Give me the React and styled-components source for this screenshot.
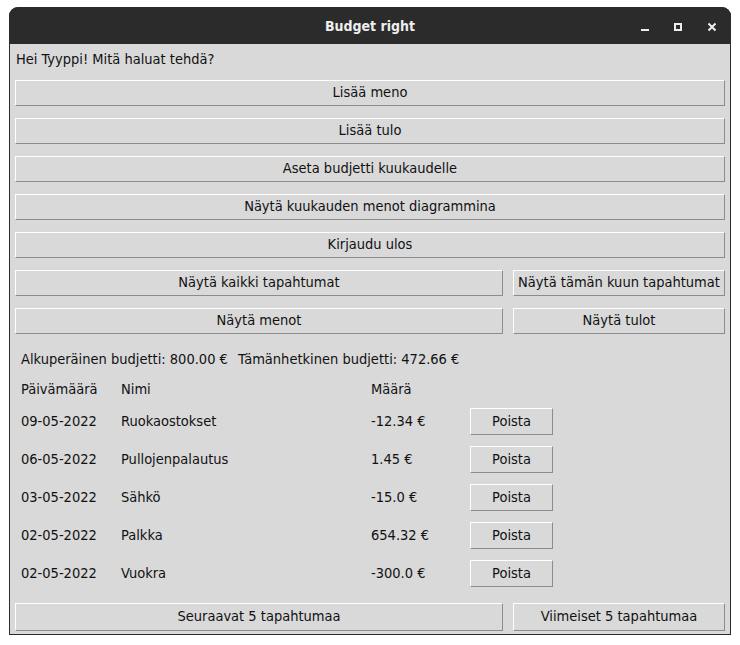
import React from "react";
import styled, { createGlobalStyle } from "styled-components";

const GlobalStyle = createGlobalStyle`
  html, body {
    margin: 0;
    padding: 0;
    background: #ffffff;
  }
  body {
    font-family: "DejaVu Sans Condensed", "DejaVu Sans", sans-serif;
    font-size: 14.5px;
    color: #111111;
  }
`;

const transactions = [
  { date: "09-05-2022", name: "Ruokaostokset", amount: "-12.34 €" },
  { date: "06-05-2022", name: "Pullojenpalautus", amount: "1.45 €" },
  { date: "03-05-2022", name: "Sähkö", amount: "-15.0 €" },
  { date: "02-05-2022", name: "Palkka", amount: "654.32 €" },
  { date: "02-05-2022", name: "Vuokra", amount: "-300.0 €" },
];

const menuButtons = [
  "Lisää meno",
  "Lisää tulo",
  "Aseta budjetti kuukaudelle",
  "Näytä kuukauden menot diagrammina",
  "Kirjaudu ulos",
];

export default function App() {
  return (
    <>
      <GlobalStyle />
      <Window>
        <TitleBar>
          <Title>Budget right</Title>
          <Controls>
            <MinimizeIcon />
            <MaximizeIcon />
            <CloseIcon viewBox="0 0 10 10">
              <path d="M1.5 1.5 L8.5 8.5 M8.5 1.5 L1.5 8.5" />
            </CloseIcon>
          </Controls>
        </TitleBar>
        <Body>
          <Greeting>Hei Tyyppi! Mitä haluat tehdä?</Greeting>
          <ButtonStack>
            {menuButtons.map((label) => (
              <Button key={label}>{label}</Button>
            ))}
            <SplitRow>
              <Button>Näytä kaikki tapahtumat</Button>
              <Button>Näytä tämän kuun tapahtumat</Button>
            </SplitRow>
            <SplitRow>
              <Button>Näytä menot</Button>
              <Button>Näytä tulot</Button>
            </SplitRow>
          </ButtonStack>
          <Budget>
            <span>Alkuperäinen budjetti: 800.00 €</span>
            <span>Tämänhetkinen budjetti: 472.66 €</span>
          </Budget>
          <Table>
            <HeaderRow>
              <Cell>Päivämäärä</Cell>
              <Cell>Nimi</Cell>
              <Cell>Määrä</Cell>
            </HeaderRow>
            {transactions.map((t, i) => (
              <Row key={i}>
                <Cell>{t.date}</Cell>
                <Cell>{t.name}</Cell>
                <Cell>{t.amount}</Cell>
                <DeleteButton>Poista</DeleteButton>
              </Row>
            ))}
          </Table>
          <SplitRow $bottom>
            <Button $tall>Seuraavat 5 tapahtumaa</Button>
            <Button $tall>Viimeiset 5 tapahtumaa</Button>
          </SplitRow>
        </Body>
      </Window>
    </>
  );
}

const Window = styled.div`
  width: 722px;
  margin: 7px 0 0 9px;
  border-radius: 9px 9px 0 0;
  overflow: hidden;
  background: #2b2b2b;
`;

const TitleBar = styled.div`
  position: relative;
  height: 37px;
  display: flex;
  align-items: center;
  justify-content: center;
  background: #2b2b2b;
`;

const Title = styled.div`
  color: #eeeeee;
  font-weight: bold;
  font-size: 14px;
`;

const Controls = styled.div`
  position: absolute;
  right: 14px;
  top: 0;
  height: 100%;
  display: flex;
  align-items: center;
  gap: 25px;
`;

const MinimizeIcon = styled.span`
  display: block;
  width: 8px;
  height: 2px;
  margin-top: 9px;
  background: #eeeeee;
`;

const MaximizeIcon = styled.span`
  display: block;
  width: 8px;
  height: 8px;
  box-sizing: border-box;
  border: 2px solid #eeeeee;
  margin-top: 3px;
`;

const CloseIcon = styled.svg`
  width: 10px;
  height: 10px;
  margin-top: 3px;
  stroke: #eeeeee;
  stroke-width: 2;
  fill: none;
`;

const Body = styled.div`
  background: #d9d9d9;
  margin: 0 1px 1px 1px;
  padding: 5px 5px 3px 5px;
  display: flex;
  flex-direction: column;
`;

const Greeting = styled.div`
  height: 20px;
  line-height: 20px;
  padding-left: 1px;
`;

const ButtonStack = styled.div`
  margin-top: 11px;
  display: flex;
  flex-direction: column;
  gap: 12px;
`;

const SplitRow = styled.div`
  display: grid;
  grid-template-columns: 488px 212px;
  column-gap: 10px;
  margin-top: ${(p) => (p.$bottom ? "16px" : "0")};
`;

const Button = styled.button`
  height: ${(p) => (p.$tall ? "28px" : "26px")};
  box-sizing: border-box;
  background: #d9d9d9;
  border: 1px solid;
  border-color: #ffffff #8c8c8c #8c8c8c #ffffff;
  font: inherit;
  color: inherit;
  padding: 0 0 2px 0;
  white-space: nowrap;
  cursor: pointer;
`;

const Budget = styled.div`
  margin-top: 15px;
  height: 20px;
  line-height: 20px;
  padding-left: 6px;
  display: flex;
  gap: 10px;
`;

const Table = styled.div`
  margin-top: 9px;
  display: flex;
  flex-direction: column;
  gap: 11px;
`;

const Row = styled.div`
  display: grid;
  grid-template-columns: 100px 250px 99px 83px;
  align-items: center;
  height: 27px;
  padding-left: 6px;
`;

const HeaderRow = styled(Row)`
  height: 20px;
  margin-top: 2px;
  margin-bottom: -3px;
`;

const Cell = styled.div`
  white-space: nowrap;
  padding-bottom: 2px;
`;

const DeleteButton = styled(Button)`
  height: 27px;
`;
